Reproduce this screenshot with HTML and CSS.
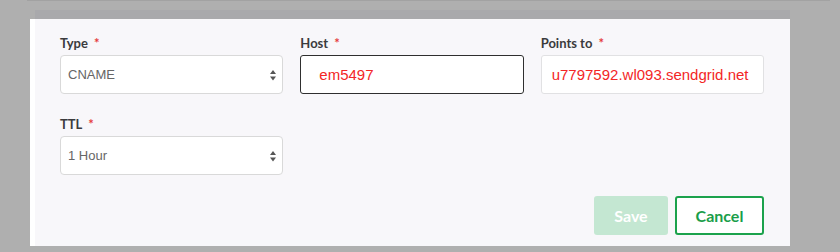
FILE: index.html
```html
<!DOCTYPE html>
<html>
<head>
<meta charset="utf-8">
<title>Edit DNS record</title>
<link rel="stylesheet" href="styles.css">
</head>
<body>
<div class="backdrop">
  <div class="topline"></div>
  <div class="shade"></div>
  <div class="modal">
    <form class="record-form">
      <div class="fields">
        <div class="field">
          <label class="label">Type <span class="req">*</span></label>
          <div class="select">
            <span>CNAME</span>
            <svg class="arrows" width="6" height="11" viewBox="0 0 6 11"><path d="M3 0 L6 4 L0 4 Z M0 6.5 L6 6.5 L3 10.5 Z" fill="#555"/></svg>
          </div>
        </div>
        <div class="field">
          <label class="label">Host <span class="req">*</span></label>
          <div class="input input-focus">em5497</div>
        </div>
        <div class="field">
          <label class="label">Points to <span class="req">*</span></label>
          <div class="input input-plain">u7797592.wl093.sendgrid.net</div>
        </div>
        <div class="field">
          <label class="label">TTL <span class="req">*</span></label>
          <div class="select">
            <span>1 Hour</span>
            <svg class="arrows" width="6" height="11" viewBox="0 0 6 11"><path d="M3 0 L6 4 L0 4 Z M0 6.5 L6 6.5 L3 10.5 Z" fill="#555"/></svg>
          </div>
        </div>
      </div>
      <div class="actions">
        <button type="button" class="btn btn-save">Save</button>
        <button type="button" class="btn btn-cancel">Cancel</button>
      </div>
    </form>
  </div>
</div>
</body>
</html>
```

FILE: styles.css
```css
html, body { margin: 0; padding: 0; }
body { background: #afafaf; width: 840px; height: 252px; overflow: hidden; }

.backdrop { height: 252px; }
.topline { height: 1px; margin-left: 27px; margin-right: 10px; background: #a2a2a2; }
.shade { height: 9px; margin-top: 9px; margin-left: 35px; width: 755px; background: #a9a9ac; }

.modal {
  margin-left: 30px;
  width: 760px;
  height: 227px;
  box-sizing: border-box;
  background: #f8f7fa;
  border-left: 5px solid #ffffff;
  padding: 16px 26px 11px 25px;
}

.record-form { display: flex; flex-direction: column; }

.fields {
  display: grid;
  grid-template-columns: repeat(3, 1fr);
  column-gap: 17px;
  row-gap: 22px;
}

.field { display: flex; flex-direction: column; gap: 4px; }

.label {
  font-family: Lato, "Noto Sans", sans-serif;
  font-weight: 700;
  font-size: 13px;
  line-height: 16px;
  color: #3b3b3d;
}
.req { color: #e53b3b; margin-left: 3px; }

.select, .input {
  height: 39px;
  box-sizing: border-box;
  background: #ffffff;
  display: flex;
  align-items: center;
  font-family: "Liberation Sans", Arial, sans-serif;
}

.select {
  border: 1px solid #d9d9d9;
  border-radius: 4px;
  padding: 0 6px 0 7px;
  justify-content: space-between;
  font-size: 13px;
  color: #666666;
}
.arrows { display: block; margin-top: 1px; }

.input { font-size: 15px; color: #f32626; border-radius: 3px; }
.input-focus { border: 1px solid #2f2f2f; padding-left: 18px; }
.input-plain { border: 1px solid #e1e1e3; padding-left: 10px; }

.actions {
  display: flex;
  justify-content: flex-end;
  gap: 7px;
  margin-top: 21px;
}

.btn {
  height: 39px;
  box-sizing: border-box;
  border-radius: 3px;
  font-family: Lato, "Noto Sans", sans-serif;
  font-weight: 700;
  font-size: 16px;
  padding: 0;
  cursor: pointer;
}
.btn-save { width: 74px; border: none; background: #c4e7d2; color: #ffffff; }
.btn-cancel { width: 89px; border: 2px solid #1ca24c; background: #ffffff; color: #1a9e4a; }
```
